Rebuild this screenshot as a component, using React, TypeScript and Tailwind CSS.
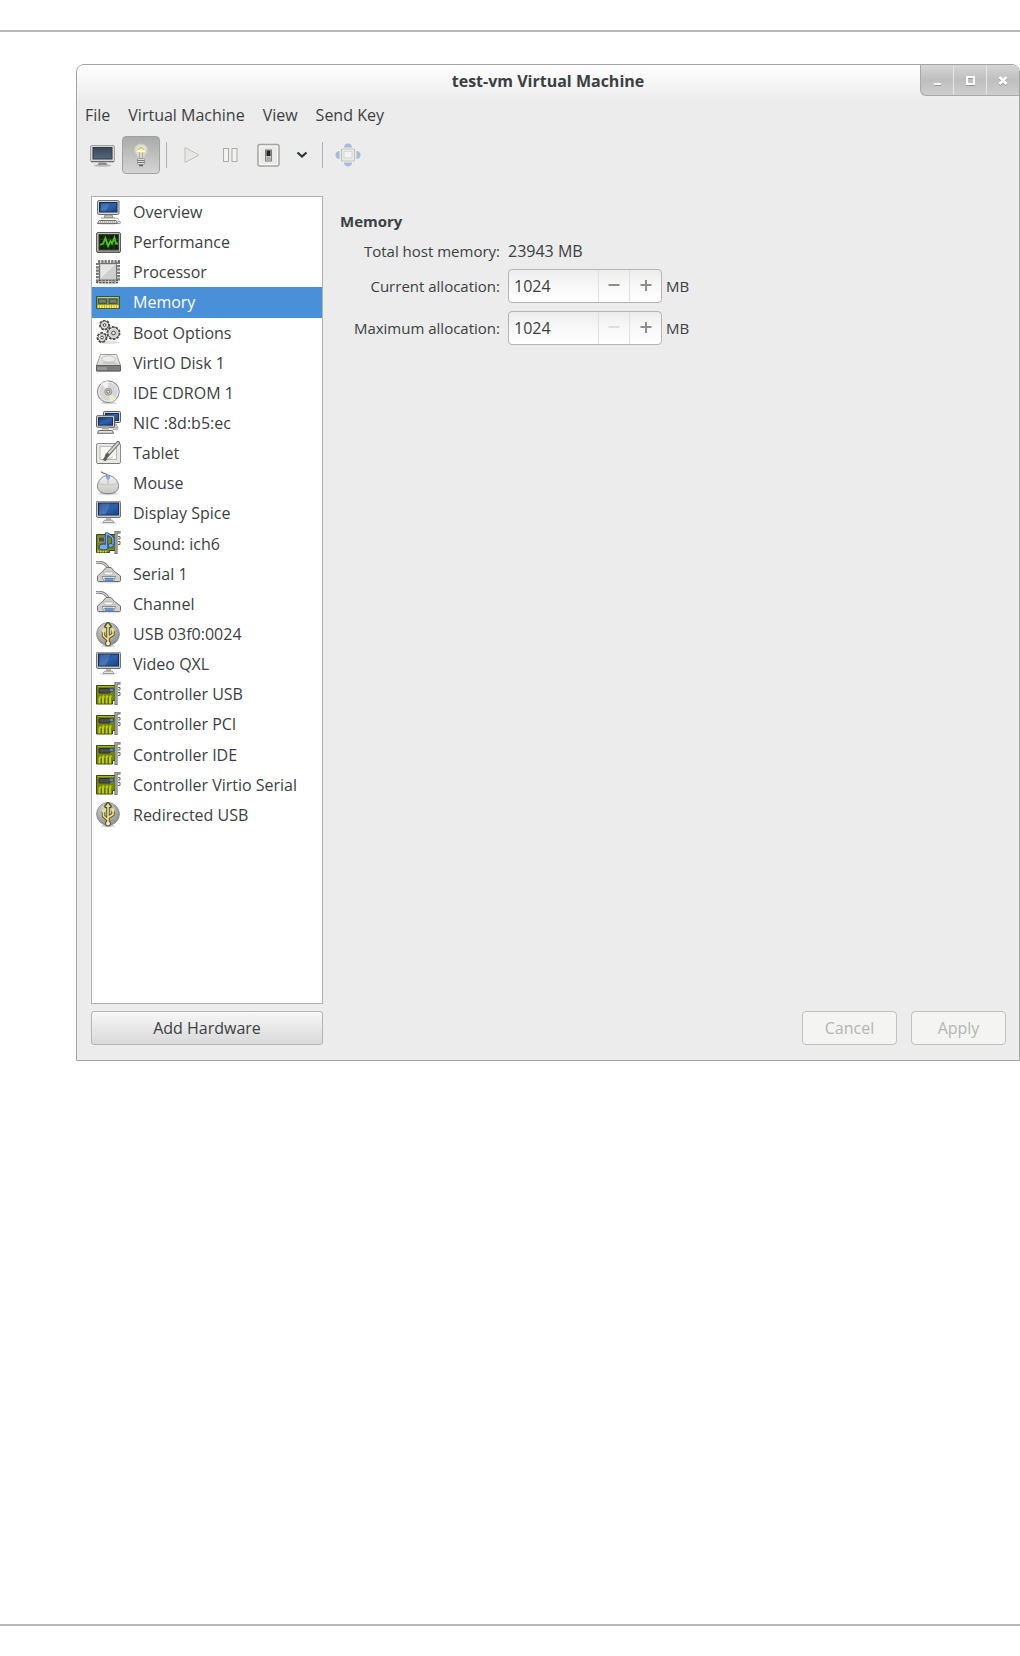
import { useState } from "react";
import type { ReactNode } from "react";

function IconDefs() {
  return (
    <svg className="absolute h-0 w-0" aria-hidden="true">
      <defs>
        <linearGradient id="screen" x1="0" y1="0" x2="1" y2="1">
          <stop offset="0" stopColor="#17386f" />
          <stop offset="0.5" stopColor="#2f62ab" />
          <stop offset="1" stopColor="#1b4484" />
        </linearGradient>
        <linearGradient id="darkscreen" x1="0" y1="0" x2="0" y2="1">
          <stop offset="0" stopColor="#38465a" />
          <stop offset="1" stopColor="#56687f" />
        </linearGradient>
        <linearGradient id="lid" x1="0" y1="0" x2="0" y2="1">
          <stop offset="0" stopColor="#f4f4f2" />
          <stop offset="1" stopColor="#c4c5c1" />
        </linearGradient>
        <radialGradient id="ball" cx="0.4" cy="0.3" r="0.8">
          <stop offset="0" stopColor="#d8d8d6" />
          <stop offset="1" stopColor="#858683" />
        </radialGradient>
      </defs>
    </svg>
  );
}

function Icon({ children }: { children: ReactNode }) {
  return (
    <svg viewBox="0 0 25 25" className="h-[25px] w-[25px] shrink-0" fill="none" aria-hidden="true">
      {children}
    </svg>
  );
}

function ComputerIcon() {
  return (
    <Icon>
      <ellipse cx="12" cy="23.6" rx="11" ry="1.2" fill="#000" opacity="0.15" />
      <rect x="1.5" y="0.5" width="21.5" height="14" rx="1.5" fill="#d0d0cc" stroke="#73746f" />
      <rect x="3.5" y="2.5" width="17.5" height="9.5" fill="url(#screen)" stroke="#132f60" />
      <path d="M5 3.500h9l-4 7H5z" fill="#7ea6db" opacity="0.35" />
      <path d="M9 15h7l1 2.500H8z" fill="#c2c3be" stroke="#777873" strokeWidth="0.8" />
      <path d="M5 18h14" stroke="#9b9c98" />
      <path d="M3 20.500h17l1.500 3H1.500z" fill="#dcdcd8" stroke="#70716d" />
      <path d="M4 22h15" stroke="#8d8e89" strokeDasharray="1 1" />
      <path d="M18 18.300c3-.7 5 0 4.500 2" stroke="#aaaba7" />
      <ellipse cx="23" cy="22.5" rx="1.5" ry="1.3" fill="#e4e4e0" stroke="#7b7c78" strokeWidth="0.7" />
    </Icon>
  );
}

function PerformanceIcon() {
  return (
    <Icon>
      <rect x="0.5" y="2.5" width="24" height="20" rx="1.5" fill="#b9bab6" stroke="#5d5e5b" />
      <path d="M1 21.500h23v1.500H1z" fill="#5c5d59" />
      <rect x="3" y="4.5" width="19.5" height="15.5" fill="#10200d" stroke="#3c3e3a" />
      <path d="M3.500 9.500h18.500M3.500 14.500h18.500M8 5v14.500M13 5v14.500M18 5v14.500" stroke="#2c5a1c" strokeWidth="0.6" />
      <path d="M4 15l3-1.500 2.500-5.500 2.500 8 2.500-5 1.500 2.500 2.500-6 1.500 6h2" stroke="#4fc01a" strokeWidth="1.8" />
    </Icon>
  );
}

function ProcessorIcon() {
  return (
    <Icon>
      <ellipse cx="12" cy="22.5" rx="11" ry="2" fill="#000" opacity="0.15" />
      <rect x="2" y="2" width="20" height="19.5" stroke="#50514e" strokeWidth="3.6" strokeDasharray="2.2 1.1" />
      <rect x="2" y="2" width="20" height="19.5" stroke="#b5b6b3" strokeWidth="1" strokeDasharray="2.2 1.1" />
      <rect x="3.5" y="3.5" width="17" height="16.5" rx="1" fill="#cfcfcd" stroke="#737471" />
      <path d="M5 5h14L5 18z" fill="#e6e6e4" />
    </Icon>
  );
}

function MemoryIcon() {
  return (
    <Icon>
      <rect x="0.5" y="6.5" width="23" height="12" fill="#7a9a5c" stroke="#35563c" />
      <path d="M1.500 7.500h21" stroke="#b5c89b" />
      <rect x="2.5" y="9" width="8" height="4.5" fill="#6b7062" stroke="#3c4b35" strokeWidth="0.8" />
      <rect x="13" y="9" width="8" height="4.5" fill="#6b7062" stroke="#3c4b35" strokeWidth="0.8" />
      <path d="M3.500 11h6M14 11h6" stroke="#8b907f" />
      <path d="M1 16.500h22" stroke="#80872a" strokeWidth="3.5" />
      <path d="M1.500 16.500h21.500" stroke="#fbe94a" strokeWidth="3" strokeDasharray="1.9 0.5" />
    </Icon>
  );
}

function Gear({ x, y, r }: { x: number; y: number; r: number }) {
  return (
    <g>
      <circle cx={x} cy={y} r={r} stroke="#4a4b48" strokeWidth="3" strokeDasharray="2.2 1.2" />
      <circle cx={x} cy={y} r={r} fill="#d0d0cd" stroke="#555653" strokeWidth="1" />
      <circle cx={x} cy={y} r={r - 1} stroke="#e5e5e2" strokeWidth="1" />
      <circle cx={x} cy={y} r={r / 3} fill="#fff" stroke="#484946" />
    </g>
  );
}

function GearsIcon() {
  return (
    <Icon>
      <ellipse cx="13" cy="22.5" rx="11" ry="1.5" fill="#000" opacity="0.12" />
      <Gear x={8.5} y={5} r={4} />
      <Gear x={6} y={17.5} r={4} />
      <Gear x={17.5} y={13} r={5.5} />
    </Icon>
  );
}

function DiskIcon() {
  return (
    <Icon>
      <path d="M4.500 4.500h16l4 11v5.500H.5v-5.500z" fill="url(#lid)" stroke="#9a9b96" strokeLinejoin="round" />
      <path d="M0.500 15.500h24v5.500H.5z" fill="#7c7d7a" stroke="#5f605d" />
      <path d="M2 17v3M4 17v3M6 17v3M8 17v3M10 17v3" stroke="#c0c1be" strokeWidth="0.8" />
      <ellipse cx="12.5" cy="9" rx="7" ry="3.3" fill="#ebebe9" stroke="#c2c3be" />
      <path d="M7 13h12l1 2" stroke="#aeb0aa" strokeWidth="0.8" />
    </Icon>
  );
}

function DiscIcon() {
  return (
    <Icon>
      <ellipse cx="12.5" cy="23" rx="8" ry="1.3" fill="#000" opacity="0.15" />
      <circle cx="12.3" cy="11.7" r="10.9" fill="#d6d6d4" stroke="#85868a" />
      <path d="M12.300 11.700L5 3.600a11 11 0 0 1 7-2.600z" fill="#f2f2f1" />
      <path d="M12.300 11.700l8 7a11 11 0 0 1-6 3.500z" fill="#efe9c6" />
      <path d="M12.300 11.700l10-2a11 11 0 0 1-.5 6z" fill="#d6d0e8" />
      <circle cx="12.3" cy="11.7" r="9.5" stroke="#f0f0ee" strokeWidth="0.8" />
      <circle cx="12.3" cy="11.7" r="3.5" fill="#c6c6c4" stroke="#989996" />
      <circle cx="12.3" cy="11.7" r="1.5" fill="#fff" stroke="#6a6b68" />
    </Icon>
  );
}

function NetworkIcon() {
  return (
    <Icon>
      <path d="M13 13h7l2 4h-8z" fill="#d2d2cf" stroke="#8a8b87" strokeWidth="0.8" />
      <rect x="7.5" y="0.5" width="17" height="11" rx="1" fill="#d6d6d2" stroke="#5c5d59" />
      <rect x="9.5" y="2.5" width="13" height="7" fill="url(#screen)" stroke="#132f60" />
      <rect x="0.5" y="4.7" width="18" height="11.5" rx="1" fill="#d6d6d2" stroke="#5c5d59" />
      <rect x="2.5" y="6.7" width="14" height="7.5" fill="url(#screen)" stroke="#132f60" />
      <path d="M6 16.500h7v2H6z" fill="#a9aaa6" />
      <path d="M2.500 19.500h14l1 2.800H1.500z" fill="#e2e2de" stroke="#6b6c68" />
      <path d="M17 18.500c3 0 4-.5 5 .5" stroke="#a5a6a2" />
    </Icon>
  );
}

function TabletIcon() {
  return (
    <Icon>
      <rect x="0.5" y="2.5" width="24" height="20" rx="1.5" fill="#e8e8e5" stroke="#8c8d89" />
      <rect x="4" y="5.5" width="16.5" height="13" fill="#f7f7f5" stroke="#b7b8b4" />
      <path d="M1.500 22.500h22" stroke="#777874" />
      <path d="M22 2L11 14.500" stroke="#6c6d6a" strokeWidth="4" strokeLinecap="round" />
      <path d="M22 2L12 13" stroke="#cfd0cd" strokeWidth="2" strokeLinecap="round" />
      <path d="M12.500 12.500L8 19.500" stroke="#5a5c59" strokeWidth="3" />
      <path d="M17 16l-8 3" stroke="#000" strokeWidth="1.5" opacity="0.15" />
    </Icon>
  );
}

function MouseIcon() {
  return (
    <Icon>
      <ellipse cx="12" cy="22.5" rx="10" ry="1.8" fill="#000" opacity="0.15" />
      <path d="M5 0.500c1 3 5 0 6.500 4.500" stroke="#7a7b78" strokeWidth="1.2" />
      <path d="M12 4.500c6 0 10.500 5.500 10.500 10.800 0 5-4.500 7.400-10.500 7.400S1.500 20.300 1.500 15.300C1.500 10 6 4.500 12 4.500z" fill="url(#lid)" stroke="#80817e" />
      <path d="M2.500 12.500c6 2 13 2 19 0" stroke="#bdbebb" strokeWidth="0.8" />
      <path d="M12 8v5" stroke="#b4b5b2" />
      <ellipse cx="12" cy="6" rx="1.6" ry="2.3" fill="#86b3ea" stroke="#6b94c8" strokeWidth="0.7" />
    </Icon>
  );
}

function DisplayIcon() {
  return (
    <Icon>
      <ellipse cx="12.5" cy="22" rx="9" ry="1.5" fill="#000" opacity="0.1" />
      <rect x="0.5" y="0" width="24" height="16.5" rx="1.5" fill="#c6c6c2" stroke="#73746f" />
      <rect x="2.5" y="2" width="20" height="12" fill="url(#screen)" stroke="#132f60" />
      <path d="M3.500 2.500h11l-5 11H3.500z" fill="#86ade0" opacity="0.3" />
      <path d="M10 17h5v2.500h-5z" fill="#b7b8b4" />
      <path d="M8.500 19.200h8l1.500 2.300H7z" fill="#e2e2df" stroke="#8a8b87" strokeWidth="0.8" />
    </Icon>
  );
}

function Bracket() {
  return (
    <g>
      <path d="M24.500 1h-4.500v22" stroke="#555753" strokeWidth="3" />
      <path d="M24.500 1h-4.500v21.500" stroke="#c9cac6" strokeWidth="1.2" />
      <path d="M22 5.500h2v2.500h-2M22 10.500h2v3h-2" stroke="#666863" />
    </g>
  );
}

function SoundIcon() {
  return (
    <Icon>
      <path d="M0.500 3.500h19v16h-6v2H.5z" fill="#7b8a12" stroke="#3d4609" />
      <rect x="2.5" y="6" width="6" height="5" fill="#4c4e48" stroke="#8d8f87" />
      <path d="M1.500 20.500h10" stroke="#dbe82c" strokeWidth="2" strokeDasharray="1.5 1" />
      <path d="M10.500 1.500v13M10.500 2.500c3 2 6.500 2.500 6.500 6v5" stroke="#1d3f74" strokeWidth="3.2" />
      <ellipse cx="7.5" cy="16" rx="4.5" ry="3" fill="#79a8e2" stroke="#1d3f74" />
      <ellipse cx="14.8" cy="14.5" rx="2.6" ry="2" fill="#79a8e2" stroke="#1d3f74" strokeWidth="0.8" />
      <path d="M10.500 2v13M10.500 2.500c3 2 6.500 2.500 6.500 6v5" stroke="#79a8e2" strokeWidth="1.6" />
      <Bracket />
    </Icon>
  );
}

function SerialIcon() {
  return (
    <Icon>
      <ellipse cx="13" cy="21" rx="12" ry="1.5" fill="#000" opacity="0.12" />
      <path d="M0 1.500c6-1 10 1 12.500 6" stroke="#868784" strokeWidth="3" />
      <path d="M0 1.500c6-1 10 1 12.500 6" stroke="#e0e0de" strokeWidth="1.2" />
      <path d="M10 6.500h5l3.500 4 6 4.500v4.500q0 1-1 1h-21q-1 0-1-1V15l5-4.500z" fill="#cfcfcd" stroke="#727370" />
      <path d="M7 11h11l-2 3H9z" fill="#f7f7f6" stroke="#a2a3a0" strokeWidth="0.7" />
      <path d="M6 15.500h13.500l-2 4.500H8z" fill="#fff" stroke="#777875" strokeWidth="0.8" />
      <path d="M8.500 17h9l-1 2.500h-7z" fill="#6c9ddb" stroke="#3c6bad" strokeWidth="0.6" />
    </Icon>
  );
}

function UsbIcon() {
  return (
    <Icon>
      <ellipse cx="12" cy="24" rx="7" ry="1" fill="#000" opacity="0.2" />
      <circle cx="12" cy="12" r="11.4" fill="url(#ball)" stroke="#858683" strokeWidth="0.8" />
      <g stroke="#55502c" strokeWidth="3.4" strokeLinejoin="round">
        <path d="M12 3v18M12 18l-4.500-4V9M12 15.500l5-3V8" />
        <path d="M9.800 4.500L12 1.500l2.200 3z" />
        <circle cx="12" cy="21.5" r="1.2" />
      </g>
      <path d="M12 3v18M12 18l-4.500-4V9M12 15.500l5-3V8" stroke="#f3e389" strokeWidth="1.6" />
      <path d="M9.500 5L12 1l2.500 4z" fill="#f3e389" />
      <circle cx="12" cy="21.5" r="1.9" fill="#f3efd2" />
      <circle cx="7.5" cy="9" r="1.6" fill="#f3e389" />
      <path d="M15.500 6.500h3v3h-3z" fill="#f3e389" />
    </Icon>
  );
}

function CardIcon() {
  return (
    <Icon>
      <path d="M0.500 3.500h19v15h-3v3.500H.5z" fill="#76860d" stroke="#3f480b" />
      <path d="M1.500 4.500h17" stroke="#a4b235" />
      <rect x="3" y="6.5" width="11" height="4.5" rx="0.5" fill="#4b4d48" stroke="#30322c" />
      <rect x="13.5" y="6.5" width="4" height="3" fill="#5d8cc6" stroke="#2a466c" strokeWidth="0.7" />
      <path d="M3.500 21.500v-5l1.500-2M7 21.500v-6l1-2M10.500 21.500v-6l1-2M14 21.500v-6l1-2" stroke="#bfce14" strokeWidth="2" />
      <path d="M5.300 22v-6M8.800 22v-6M12.300 22v-6" stroke="#4f590d" strokeWidth="0.8" />
      <Bracket />
    </Icon>
  );
}

const devices = [
  { name: "Overview", icon: <ComputerIcon /> },
  { name: "Performance", icon: <PerformanceIcon /> },
  { name: "Processor", icon: <ProcessorIcon /> },
  { name: "Memory", icon: <MemoryIcon /> },
  { name: "Boot Options", icon: <GearsIcon /> },
  { name: "VirtIO Disk 1", icon: <DiskIcon /> },
  { name: "IDE CDROM 1", icon: <DiscIcon /> },
  { name: "NIC :8d:b5:ec", icon: <NetworkIcon /> },
  { name: "Tablet", icon: <TabletIcon /> },
  { name: "Mouse", icon: <MouseIcon /> },
  { name: "Display Spice", icon: <DisplayIcon /> },
  { name: "Sound: ich6", icon: <SoundIcon /> },
  { name: "Serial 1", icon: <SerialIcon /> },
  { name: "Channel", icon: <SerialIcon /> },
  { name: "USB 03f0:0024", icon: <UsbIcon /> },
  { name: "Video QXL", icon: <DisplayIcon /> },
  { name: "Controller USB", icon: <CardIcon /> },
  { name: "Controller PCI", icon: <CardIcon /> },
  { name: "Controller IDE", icon: <CardIcon /> },
  { name: "Controller Virtio Serial", icon: <CardIcon /> },
  { name: "Redirected USB", icon: <UsbIcon /> },
];

function TitleBar() {
  return (
    <header className="grid h-9 grid-cols-[1fr_auto_1fr] items-start bg-linear-to-b from-white to-[#ececec]">
      <h1 className="col-start-2 pt-1 font-bold">test-vm Virtual Machine</h1>
      <div className="flex h-[31px] w-[99px] justify-self-end divide-x divide-[#e6e6e6] rounded-bl-md border-b border-l border-[#a9a9a9] bg-linear-to-b from-[#d6d6d6] via-[#bebebe] to-[#cecece]">
        <button aria-label="Minimize" className="flex flex-1 items-center justify-center pt-0.5">
          <svg viewBox="0 0 12 12" className="h-3 w-3">
            <path d="M3 10.500h7" stroke="#999" strokeWidth="1" />
            <path d="M3 9h7" stroke="#fff" strokeWidth="2" />
          </svg>
        </button>
        <button aria-label="Maximize" className="flex flex-1 items-center justify-center pt-0.5">
          <svg viewBox="0 0 12 12" className="h-3 w-3" fill="none">
            <rect x="3" y="3" width="7" height="7" stroke="#999" strokeWidth="2" />
            <rect x="3" y="2" width="7" height="7" stroke="#fff" strokeWidth="2" />
          </svg>
        </button>
        <button aria-label="Close" className="flex flex-1 items-center justify-center pt-0.5">
          <svg viewBox="0 0 12 12" className="h-3 w-3">
            <path d="M2.500 3l7 7m0-7l-7 7" stroke="#999" strokeWidth="2.5" />
            <path d="M2.500 2l7 7m0-7l-7 7" stroke="#fff" strokeWidth="2.5" />
          </svg>
        </button>
      </div>
    </header>
  );
}

function Toolbar() {
  return (
    <div className="flex h-[38px] items-center pl-[13px]">
      <button aria-label="Console" className="mr-[7px]">
        <svg viewBox="0 0 25 23" className="h-[23px] w-[25px]" fill="none">
          <ellipse cx="12.5" cy="21.5" rx="9" ry="1.3" fill="#000" opacity="0.2" />
          <rect x="0.5" y="1.5" width="24" height="16.5" rx="1.5" fill="#d5d5d2" stroke="#a2a3a0" />
          <rect x="3" y="3.5" width="19" height="11.5" fill="url(#darkscreen)" stroke="#303c4c" />
          <path d="M1 17.500h23" stroke="#6d6e6b" />
          <path d="M9 18.500h7l1.500 2.500h-10z" fill="#8b8c89" />
        </svg>
      </button>
      <button aria-label="Details" className="mr-[6px] flex h-[38px] w-[38px] items-center justify-center rounded-sm border border-[#a0a2a0] bg-linear-to-b from-[#a9aba9] to-[#d4d5d4]">
        <svg viewBox="0 0 16 24" className="h-6 w-4" fill="none">
          <path d="M8 1c4 0 6.500 2.500 6.500 6 0 3.500-3 4.500-3.500 8.500H5C4.500 11.500 1.500 10.500 1.500 7 1.500 3.500 4 1 8 1z" fill="#d9dad2" stroke="#c6c8c3" />
          <ellipse cx="8" cy="6.5" rx="4.5" ry="3" fill="#f3eda4" />
          <path d="M4.500 7c2-3 5-3 7 0l-2 2.500v6M4.500 7l2 2.500v6" stroke="#aaa57e" strokeWidth="0.8" />
          <path d="M4 7.500c2 1.300 6 1.300 8 0" stroke="#fffce2" strokeWidth="1.6" />
          <rect x="4.5" y="15.5" width="7" height="6" rx="1" fill="#dcdddb" stroke="#9a9c98" />
          <path d="M4.500 17.500h7M4.500 19.500h7" stroke="#7a7c78" />
          <path d="M6 22.500h4" stroke="#60625f" strokeWidth="1.5" />
        </svg>
      </button>
      <span className="mr-[17px] h-[26px] w-px bg-[#b2b2b2]" />
      <button aria-label="Run" disabled className="mr-[23px]">
        <svg viewBox="0 0 16 18" className="h-[18px] w-4">
          <path d="M1 1.500l14 7.500L1 16.500z" fill="#e7e7e5" stroke="#bfc1bb" strokeLinejoin="round" />
        </svg>
      </button>
      <button aria-label="Pause" className="mr-[19px]">
        <svg viewBox="0 0 15 14" className="h-[14px] w-[15px]" fill="#f3f3f1" stroke="#aaaca5">
          <rect x="0.5" y="0.5" width="5" height="13" />
          <rect x="9" y="0.5" width="5" height="13" />
        </svg>
      </button>
      <button aria-label="Shut Down" className="mr-4">
        <svg viewBox="0 0 23 24" className="h-6 w-[23px]" fill="none">
          <rect x="1" y="1.5" width="21" height="21.5" rx="2" fill="#f8f8f7" stroke="#a3a4a1" strokeWidth="1.5" />
          <rect x="3" y="3.5" width="17" height="17.5" rx="1" fill="#e9e9e7" />
          <rect x="8.5" y="7" width="6" height="11" fill="#d6d7d4" stroke="#7c7d7a" />
          <rect x="9.5" y="7.5" width="4" height="5.5" fill="#222423" />
          <path d="M9 17.500l1-4h3l1 4z" fill="#a9aaa7" />
        </svg>
      </button>
      <button aria-label="Shut Down Options" className="mr-[14px]">
        <svg viewBox="0 0 12 8" className="h-2 w-3" fill="none">
          <path d="M1.500 1.500L6 5.500l4.500-4" stroke="#2e3436" strokeWidth="2.2" />
        </svg>
      </button>
      <span className="mr-3 h-[26px] w-px bg-[#b2b2b2]" />
      <button aria-label="Fullscreen" disabled>
        <svg viewBox="0 0 26 24" className="h-6 w-[26px]" fill="#a5bbdb">
          <path d="M9 4.500c0-2.500 2-4 4-4s4 1.500 4 4zM9 19.500c0 2.500 2 4 4 4s4-1.500 4-4zM4.500 8C2 8 .5 10 .5 12s1.500 4 4 4zM21.500 8c2.500 0 4 2 4 4s-1.500 4-4 4z" />
          <rect x="6.5" y="6" width="13" height="12" rx="1" fill="#ebebe9" stroke="#c3c4c0" strokeWidth="1.2" />
          <rect x="9" y="8.5" width="8" height="6.5" fill="#f3f3f1" stroke="#d7d8d4" />
        </svg>
      </button>
    </div>
  );
}

type SpinProps = {
  id: string;
  label: string;
  value: number;
  min: number;
  onChange: (n: number) => void;
};

function SpinRow({ id, label, value, min, onChange }: SpinProps) {
  return (
    <>
      <label htmlFor={id} className="justify-self-end text-[15px]">{label}</label>
      <div className="flex items-center gap-1">
        <div className="flex h-[34px] w-[154px] divide-x divide-[#e0e0e0] overflow-hidden rounded-[4px] border border-[#b4b4b4] bg-linear-to-b from-[#ededed] via-[#f8f8f8] to-white">
          <input
            id={id}
            type="text"
            value={value}
            onChange={(e) => onChange(Number(e.target.value) || 0)}
            className="min-w-0 flex-1 pl-[5px] outline-none"
          />
          <button
            aria-label={"Decrease " + label}
            disabled={value <= min}
            onClick={() => onChange(value - 1)}
            className="flex w-[31px] items-center justify-center text-[#8d8f88] disabled:text-[#dededc]"
          >
            <svg viewBox="0 0 12 12" className="h-3 w-3">
              <path d="M0.500 5h11" stroke="currentColor" strokeWidth="2" />
            </svg>
          </button>
          <button
            aria-label={"Increase " + label}
            onClick={() => onChange(value + 1)}
            className="flex w-[31px] items-center justify-center text-[#8d8f88]"
          >
            <svg viewBox="0 0 12 12" className="h-3 w-3">
              <path d="M0.500 5h11M6 0v11" stroke="currentColor" strokeWidth="2" />
            </svg>
          </button>
        </div>
        <span className="text-[15px]">MB</span>
      </div>
    </>
  );
}

function App() {
  const [selected, setSelected] = useState("Memory");
  const [current, setCurrent] = useState(1024);
  const [maximum, setMaximum] = useState(1024);

  return (
    <div className="flex min-h-screen flex-col bg-white py-[30px] font-['Open_Sans','Noto_Sans',sans-serif] text-[16px] leading-6 text-[#3b4143]">
      <IconDefs />
      <hr className="border-t-2 border-[#b9b9b9]" />

      <main className="mt-8 mb-8 ml-[76px] overflow-hidden rounded-t-lg border border-[#a4a4a4] bg-[#ececec]">
        <TitleBar />

        {/* Menu */}
        <nav className="flex h-[35px] items-start gap-[18px] pt-[2px] pl-[8px]">
          <button>File</button>
          <button>Virtual Machine</button>
          <button>View</button>
          <button>Send Key</button>
        </nav>

        <Toolbar />

        <div className="flex gap-[17px] pt-[22px] pr-[13px] pb-[15px] pl-[14px]">
          {/* Hardware list */}
          <aside className="flex w-[232px] shrink-0 flex-col gap-[7px]">
            <div className="h-[808px] border border-[#b1b1b1] bg-white">
              <ul className="grid h-[633px] auto-rows-fr">
                {devices.map((d) => (
                  <li key={d.name} className="flex">
                    <button
                      onClick={() => setSelected(d.name)}
                      className={
                        d.name === selected
                          ? "flex flex-1 items-center gap-3 bg-[#4a90d9] pl-1 text-left text-white"
                          : "flex flex-1 items-center gap-3 pl-1 text-left"
                      }
                    >
                      {d.icon}
                      <span>{d.name}</span>
                    </button>
                  </li>
                ))}
              </ul>
            </div>
            <button className="h-[34px] rounded-[3px] border border-[#b4b4b4] bg-linear-to-b from-[#f7f7f7] to-[#d9d9d9]">
              Add Hardware
            </button>
          </aside>

          {/* Details */}
          <section className="flex flex-1 flex-col pt-[13px]">
            <h2 className="text-[15px] font-bold">Memory</h2>
            <div className="mt-2 grid grid-cols-[160px_1fr] items-center gap-2">
              <span className="justify-self-end text-[15px] leading-5">Total host memory:</span>
              <span className="leading-5">23943 MB</span>
              <SpinRow id="current" label="Current allocation:" value={current} min={0} onChange={setCurrent} />
              <SpinRow id="maximum" label="Maximum allocation:" value={maximum} min={1024} onChange={setMaximum} />
            </div>
            <div className="mt-auto flex justify-end gap-[14px]">
              <button disabled className="h-[34px] w-[95px] rounded-[4px] border border-[#c0c0c0] bg-[#f4f4f2] text-[#b3b7b3]">Cancel</button>
              <button disabled className="h-[34px] w-[95px] rounded-[4px] border border-[#c0c0c0] bg-[#f4f4f2] text-[#b3b7b3]">Apply</button>
            </div>
          </section>
        </div>
      </main>

      <hr className="mt-auto border-t-2 border-[#b9b9b9]" />
    </div>
  );
}

export default App;
